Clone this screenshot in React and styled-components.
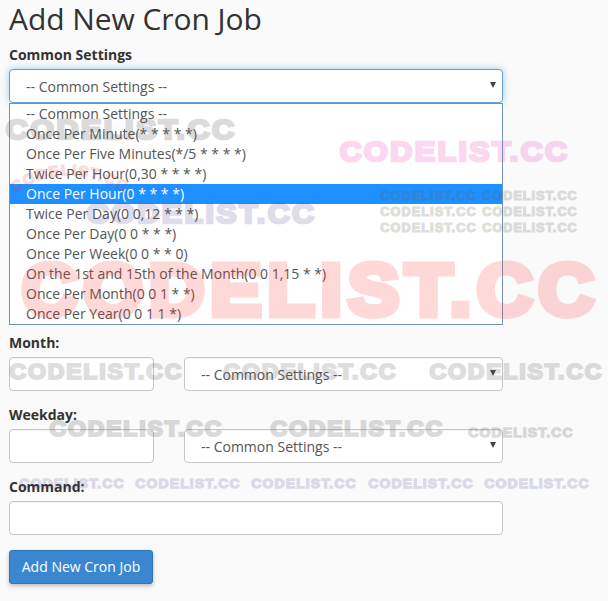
import React from "react";
import styled, { createGlobalStyle } from "styled-components";

const GlobalStyle = createGlobalStyle`
  * { box-sizing: border-box; }
  body {
    margin: 0;
    background: #fafafa;
    color: #333;
    font: 14px/20px "Open Sans", sans-serif;
    overflow: hidden;
  }
`;

const Page = styled.main`
  position: relative;
  width: 608px;
  height: 601px;
  padding: 2px 0 0 9px;
  overflow: hidden;
`;

const Form = styled.form`
  width: 494px;
  display: flex;
  flex-direction: column;
`;

const Title = styled.h1`
  margin: 0 0 10px;
  font-size: 30px;
  line-height: 33px;
  font-weight: 400;
  letter-spacing: -0.07px;
  white-space: nowrap;
`;

const Group = styled.div`
  height: 72px;
  display: flex;
  flex-direction: column;
`;

const Label = styled.label`
  height: 24px;
  line-height: 20px;
  font-weight: 700;
`;

const Row = styled.div`
  display: grid;
  grid-template-columns: 145px 319px;
  gap: 30px;
`;

const Field = styled.div`
  height: 34px;
  padding: 1px 6px 0 16px;
  display: flex;
  align-items: center;
  justify-content: space-between;
  background: #fff;
  color: #555;
  border: 1px solid ${(p) => (p.$focused ? "#66a3d2" : "#c6c6c6")};
  border-radius: 4px;
  box-shadow: ${(p) =>
    p.$focused
      ? "0 0 7px rgba(102, 175, 233, 0.65)"
      : "inset 0 1px 1px rgba(0, 0, 0, 0.05)"};
`;

const Arrow = styled.svg`
  width: 6px;
  height: 6px;
  margin-bottom: 3px;
  fill: #444;
`;

const Options = styled.ul`
  list-style: none;
  margin: 0 0 8px;
  padding: 0;
  height: 222px;
  background: #fff;
  border: 1px solid #6f93b8;
`;

const Option = styled.li`
  height: 20px;
  padding-left: 16px;
  line-height: 20px;
  white-space: nowrap;
  color: ${(p) => (p.$active ? "#fff" : "#555")};
  background: ${(p) => (p.$active ? "#1e90ff" : "transparent")};
`;

const Submit = styled.button`
  align-self: flex-start;
  margin-top: 1px;
  width: 144px;
  height: 34px;
  padding: 0;
  font: 14px/20px "Open Sans", sans-serif;
  color: #fff;
  background: #3a87cf;
  border: 1px solid #2f76b5;
  border-radius: 3px;
  box-shadow: 0 2px 4px rgba(0, 0, 0, 0.25);
`;

const Overlay = styled.svg`
  position: absolute;
  inset: 0;
  pointer-events: none;
  font-family: "Liberation Sans", Arial, sans-serif;
  font-weight: 700;
`;

const options = [
  "-- Common Settings --",
  "Once Per Minute(* * * * *)",
  "Once Per Five Minutes(*/5 * * * *)",
  "Twice Per Hour(0,30 * * * *)",
  "Once Per Hour(0 * * * *)",
  "Twice Per Day(0 0,12 * * *)",
  "Once Per Day(0 0 * * *)",
  "Once Per Week(0 0 * * 0)",
  "On the 1st and 15th of the Month(0 0 1,15 * *)",
  "Once Per Month(0 0 1 * *)",
  "Once Per Year(0 0 1 1 *)",
];

const GRAY = "#606060";
const LAVENDER = "#4a3c8c";

// x, baseline, width, cap height, colour, opacity
const marks = [
  [5, 140, 230, 22, GRAY, 0.22],
  [339, 162, 229, 22, "#f050c0", 0.22],
  [86, 224, 229, 22, LAVENDER, 0.17],
  [20, 318, 576, 56, "#ff3030", 0.18],
  ...[201, 217, 232.5].flatMap((y) => [
    [380, y, 96, 9.5, "#606050", 0.2],
    [482, y, 95, 9.5, "#606050", 0.2],
  ]),
  ...[9, 223, 429].map((x) => [x, 380.5, 173, 17, GRAY, 0.2]),
  ...[49, 270].map((x) => [x, 437.5, 173, 17, GRAY, 0.22]),
  [468, 437.5, 105, 10.5, GRAY, 0.22],
  ...[19, 135, 251, 368, 484].map((x) => [x, 489, 105, 10.5, LAVENDER, 0.17]),
];

function Mark({ x, y, width, cap, color, opacity }) {
  const size = cap / 0.785;
  const stroke = size * 0.095;
  const gap = size * 0.08;
  return (
    <g opacity={opacity}>
      <text
        x={x + stroke / 4}
        y={y - stroke / 2}
        fontSize={size}
        letterSpacing={gap}
        textLength={width + gap - stroke / 2}
        lengthAdjust="spacingAndGlyphs"
        fill={color}
        stroke={color}
        strokeWidth={stroke}
      >
        CODELIST.CC
      </text>
    </g>
  );
}

function Select({ focused }) {
  return (
    <Field $focused={focused}>
      <span>-- Common Settings --</span>
      <Arrow viewBox="0 0 6 6">
        <path d="M0 0h6L3 6z" />
      </Arrow>
    </Field>
  );
}

export default function App() {
  return (
    <Page>
      <GlobalStyle />
      <Form>
        <Title>Add New Cron Job</Title>
        <Label>Common Settings</Label>
        <Select focused />
        <Options>
          {options.map((text, i) => (
            <Option key={text} $active={i === 4}>
              {text}
            </Option>
          ))}
        </Options>
        {["Month:", "Weekday:"].map((name) => (
          <Group key={name}>
            <Label>{name}</Label>
            <Row>
              <Field />
              <Select />
            </Row>
          </Group>
        ))}
        <Group>
          <Label>Command:</Label>
          <Field />
        </Group>
        <Submit type="button">Add New Cron Job</Submit>
      </Form>
      <Overlay width="608" height="601">
        {marks.map(([x, y, width, cap, color, opacity], i) => (
          <Mark key={i} {...{ x, y, width, cap, color, opacity }} />
        ))}
        <path id="arc" d="M15 193 Q66 158 124 192" fill="none" />
        <g opacity="0.17">
          <text
            fontSize="15"
            letterSpacing="1.6"
            fill="#f03030"
            stroke="#f03030"
            strokeWidth="1.4"
          >
            <textPath href="#arc">CODELIST.CC</textPath>
          </text>
        </g>
      </Overlay>
    </Page>
  );
}
